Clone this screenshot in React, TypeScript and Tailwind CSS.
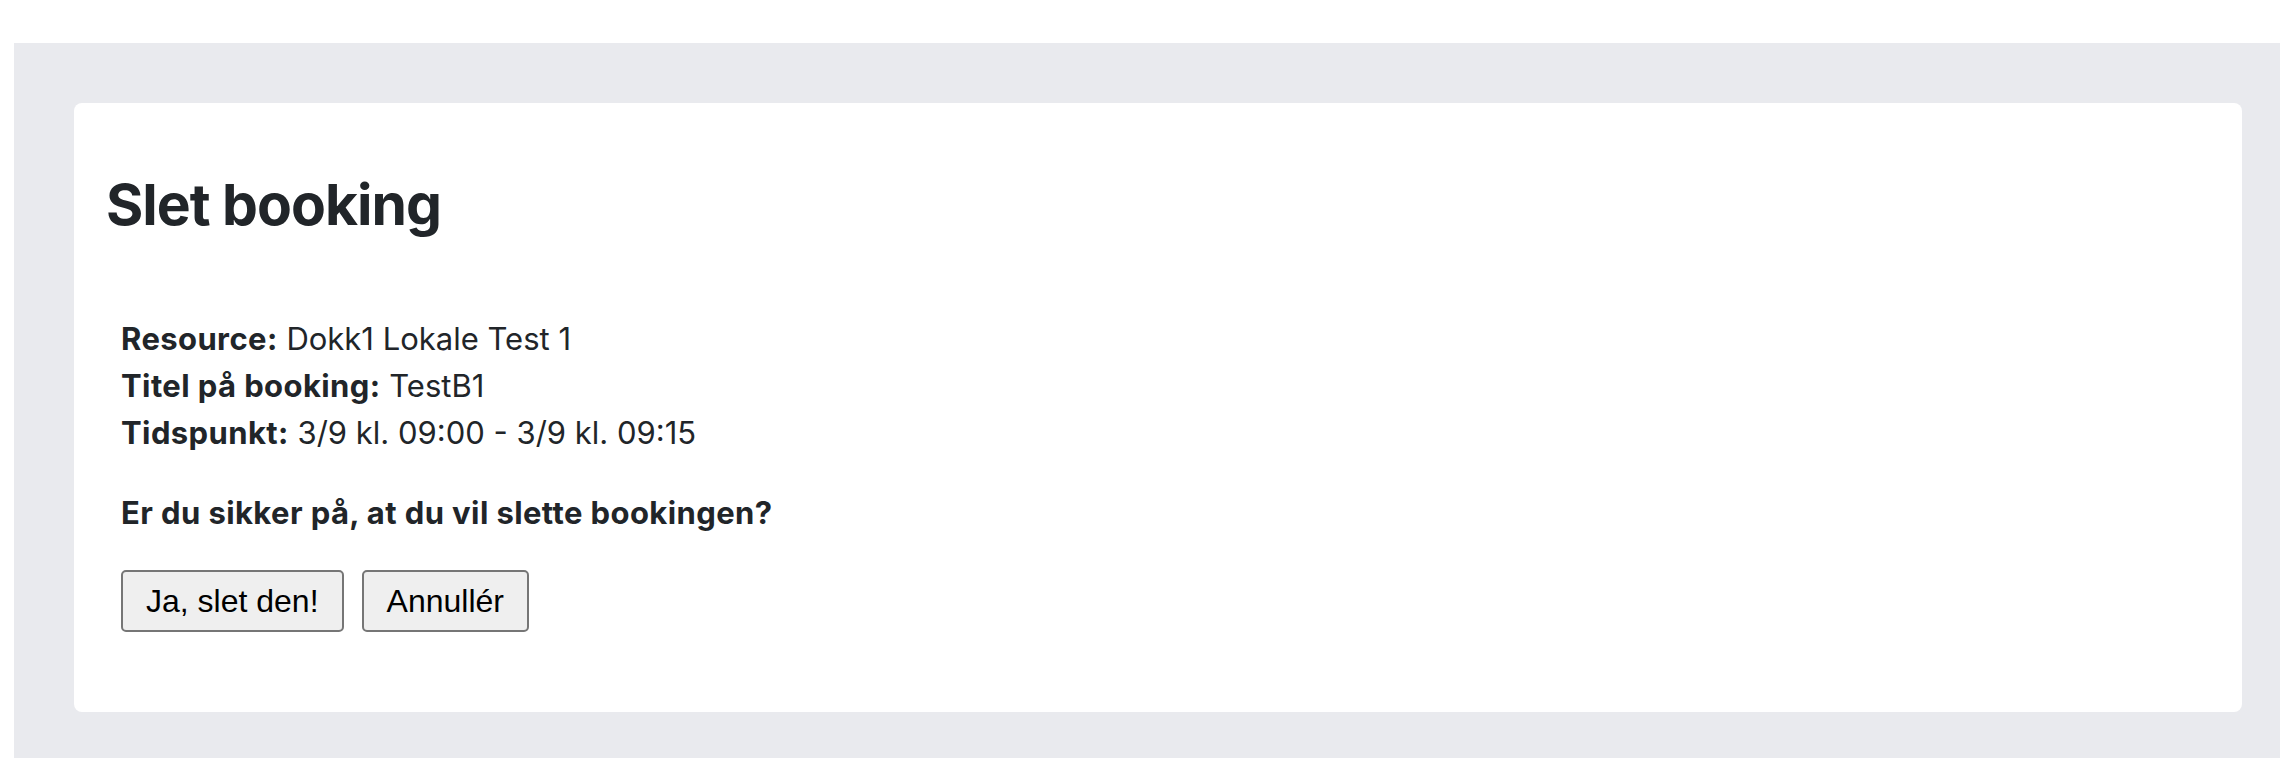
export default function App() {
  return (
    <div className="min-h-screen bg-white pl-[14px] pt-[43px] font-['Inter',sans-serif] text-[#212529]">
      <div className="min-h-[715px] bg-[#e9eaee] pb-[45px] pl-[60px] pr-[38px] pt-[60px]">
        <div className="rounded-[8px] bg-white px-[30px] pb-[80px] pt-[66px]">
          <h1 className="ml-[2px] text-[57px] font-bold leading-[72px] tracking-[-1px]">Slet booking</h1>

          <div className="ml-[17px] mt-[74px]">
            <div className="text-[31px] leading-[47px]">
              <div>
                <span className="font-bold tracking-[0.4px]">Resource:</span> Dokk1 Lokale Test 1
              </div>
              <div>
                <span className="font-bold tracking-[0.4px]">Titel på booking:</span> TestB1
              </div>
              <div>
                <span className="font-bold tracking-[0.4px]">Tidspunkt:</span> 3/9 kl. 09:00 - 3/9 kl. 09:15
              </div>
            </div>

            <p className="mt-[33px] text-[31px] font-bold leading-[47px] tracking-[0.4px]">
              Er du sikker på, at du vil slette bookingen?
            </p>

            <div className="mt-[34px] flex gap-[18px]">
              <button className="h-[62px] rounded-[5px] border-2 border-[#767676] bg-[#efefef] px-[23px] font-['Liberation_Sans',Arial,sans-serif] text-[32px] text-black">
                Ja, slet den!
              </button>
              <button className="h-[62px] rounded-[5px] border-2 border-[#767676] bg-[#efefef] px-[23px] font-['Liberation_Sans',Arial,sans-serif] text-[32px] text-black">
                Annullér
              </button>
            </div>
          </div>
        </div>
      </div>
    </div>
  );
}
